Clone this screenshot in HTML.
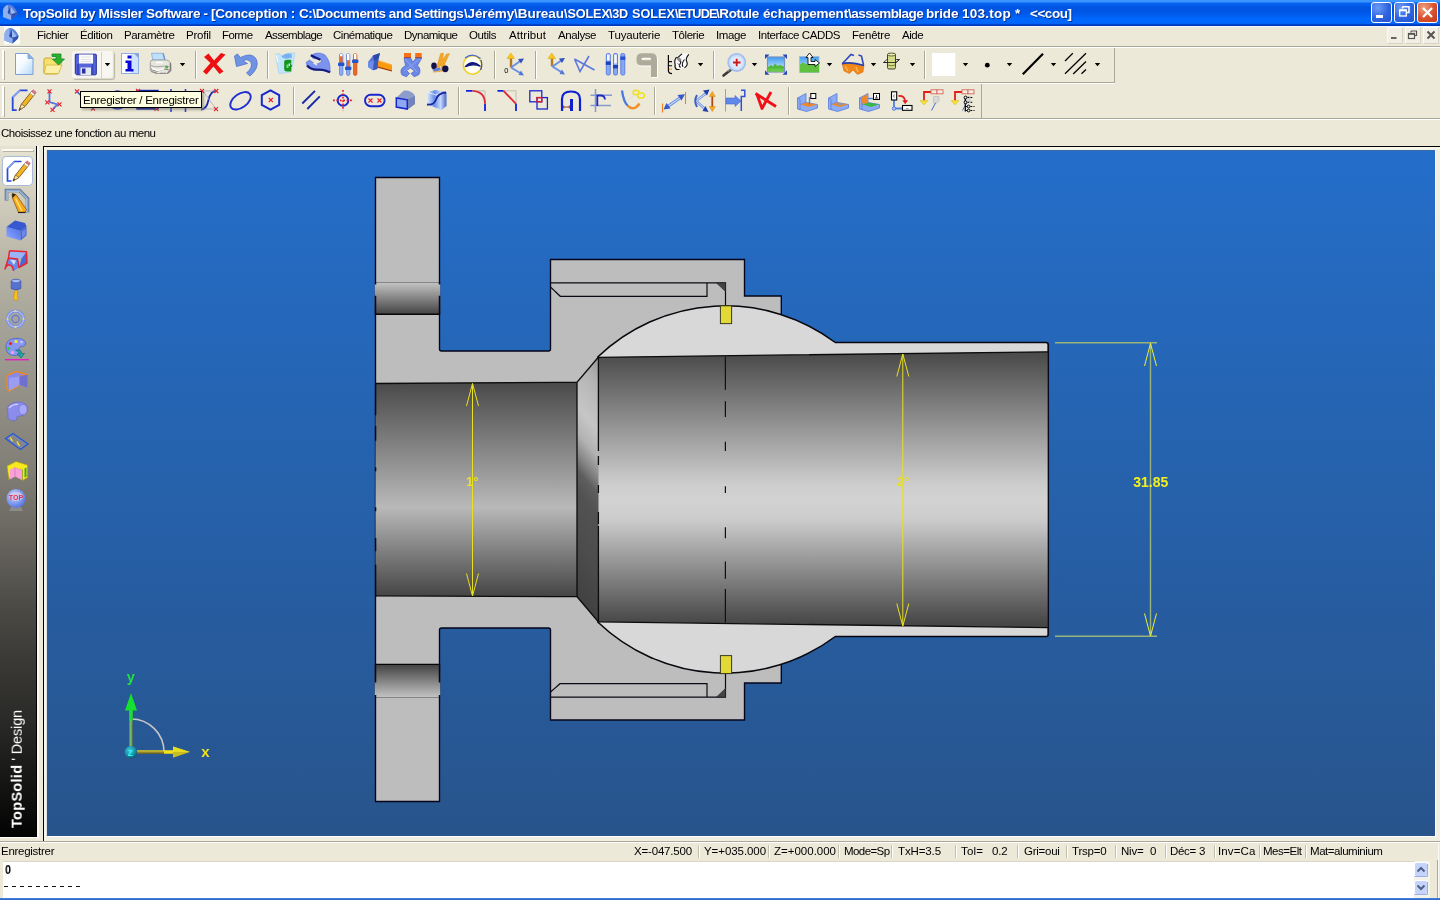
<!DOCTYPE html>
<html lang="fr"><head><meta charset="utf-8"><title>TopSolid by Missler Software</title>
<style>
html,body{margin:0;padding:0}
body{width:1440px;height:900px;overflow:hidden;background:#ECE9D8;position:relative;font-family:"Liberation Sans",sans-serif;font-size:11px;color:#000}
.a{position:absolute}
.t{position:absolute;white-space:pre;line-height:1;will-change:transform}
#title{left:0;top:0;width:1440px;height:26px;background:linear-gradient(180deg,#3c96ff 0,#3b94ff 2px,#0862f0 3px,#0460ee 5px,#0054e0 7px,#0055e4 11px,#005cef 15px,#0066fc 18px,#0068ff 22px,#0062f6 23.500px,#0044cc 24.500px,#0034b0 26px);border-bottom:1px solid #f2f5fb}
#title .t{color:#fff;font-weight:bold;font-size:13.5px;text-shadow:1px 1px 0 #0a2f8a}
.wb{position:absolute;top:2px;width:21px;height:21px;border-radius:3px;box-sizing:border-box;border:1px solid #fff;background:radial-gradient(circle at 30% 25%,#6c9cf5 0,#2e63e0 55%,#2352cf 100%)}
.wb.x{background:radial-gradient(circle at 30% 25%,#f0a080 0,#d8502c 55%,#c23a18 100%)}
#menu{left:0;top:25px;width:1440px;height:21px}
.sepH{position:absolute;left:0;width:1440px;height:1px}
.tbar{position:absolute;box-sizing:border-box;border-right:1px solid #aca899;border-bottom:1px solid #aca899;border-top:1px solid #fff}
.grip{position:absolute;width:1px;background:#aca899;box-shadow:1px 0 0 #fff}
.vsep{position:absolute;width:1px;background:#aca899;box-shadow:1px 0 0 #fff}
.ic{position:absolute;overflow:visible}
svg{will-change:transform}
.dd{position:absolute;width:0;height:0;border-left:3.5px solid transparent;border-right:3.5px solid transparent;border-top:4px solid #000}
#side{left:0;top:146px;width:36px;height:691px;background:linear-gradient(180deg,#e6e3d2 0,#d0cdbd 54px,#b9b6a8 114px,#a4a296 184px,#929086 254px,#807e75 324px,#67655e 394px,#4b4944 464px,#3a3936 514px,#2a2a28 574px,#161615 634px,#030303 690px);border-right:1px solid #000}
#frame{left:43px;top:146px;width:1397px;height:695px;box-sizing:border-box;border:1px solid #000;border-width:1px 0 0 1px;background:#f1efe2;box-shadow:inset 2px 2px 0 #f6f5ec}
#cv{left:47px;top:150px;width:1388px;height:686px;box-shadow:1px 1px 0 #fff,-1px 0 0 #dfe3e6}
#status .t{font-size:11px}
.ssep{position:absolute;top:845px;width:1px;height:13px;background:#c2bfae;box-shadow:1px 0 0 #fff}
</style></head><body>

<div class="a" id="title"><svg class="a" style="left:0;top:0" width="22" height="26" viewBox="0 0 22 26"><defs><g id="tsl"><path d="M3 10Q4 5 9 4.500Q14 5 17 12L16.500 15L11 20L3 17Z" fill="#5a80d8"/><path d="M3 10Q4 6 8 5L8 13L11.500 15L11 20L3 17Z" fill="#8fb0ee"/><path d="M7.500 12.500L10.500 6.500V13.800Z" fill="#2a48a0"/><path d="M10.500 6.500L15.500 13L10.500 13.800Z" fill="#9cb8f2"/><path d="M11.500 15L16.800 12.500L16.500 15L11 20Z" fill="#3454b4"/><path d="M8 13L11.500 15L16.800 12.500" fill="none" stroke="#2a48a0" stroke-width=".7"/></g></defs><use href="#tsl"/></svg>
<span class="t" style="left:23.0px;top:6.5px;font-size:13.5px;font-weight:bold;letter-spacing:-0.364px;">TopSolid by Missler Software - </span><span class="t" style="left:211.0px;top:6.5px;font-size:13.5px;font-weight:bold;letter-spacing:-0.232px;">[Conception : </span><span class="t" style="left:298.5px;top:6.5px;font-size:13.5px;font-weight:bold;letter-spacing:-0.419px;">C:\Documents and </span><span class="t" style="left:414.4px;top:6.5px;font-size:13.5px;font-weight:bold;letter-spacing:-0.508px;">Settings</span><span class="t" style="left:463.6px;top:6.5px;font-size:13.5px;font-weight:bold;letter-spacing:-0.150px;">\Jérémy</span><span class="t" style="left:513.6px;top:6.5px;font-size:13.5px;font-weight:bold;letter-spacing:-0.038px;">\Bureau</span><span class="t" style="left:563.6px;top:7.6px;font-size:12.7px;font-weight:bold;letter-spacing:-0.122px;">\SOLEX</span><span class="t" style="left:609.4px;top:7.6px;font-size:12.7px;font-weight:bold;letter-spacing:-0.245px;">\3D </span><span class="t" style="left:631.7px;top:7.6px;font-size:12.7px;font-weight:bold;letter-spacing:-0.003px;">SOLEX</span><span class="t" style="left:674.7px;top:7.6px;font-size:12.7px;font-weight:bold;letter-spacing:-0.805px;">\ETUDE</span><span class="t" style="left:716.4px;top:6.5px;font-size:13.5px;font-weight:bold;letter-spacing:-0.425px;">\Rotule </span><span class="t" style="left:762.5px;top:6.5px;font-size:13.5px;font-weight:bold;letter-spacing:-0.185px;">échappement</span><span class="t" style="left:847.5px;top:6.5px;font-size:13.5px;font-weight:bold;letter-spacing:-0.525px;">\assemblage </span><span class="t" style="left:926.0px;top:6.5px;font-size:13.5px;font-weight:bold;letter-spacing:-0.128px;">bride </span><span class="t" style="left:962.0px;top:6.5px;font-size:13.5px;font-weight:bold;letter-spacing:0.248px;">103.top </span><span class="t" style="left:1015.0px;top:6.5px;font-size:13.5px;font-weight:bold;letter-spacing:0.745px;">*  </span><span class="t" style="left:1030.0px;top:6.5px;font-size:13.5px;font-weight:bold;letter-spacing:-0.461px;">&lt;&lt;cou]</span><div class="wb" style="left:1371px"><div class="a" style="left:4px;top:12px;width:7px;height:3px;background:#fff"></div></div>
<div class="wb" style="left:1394px"><svg class="a" style="left:3px;top:2px" width="13" height="13" viewBox="0 0 13 13"><path d="M4.500 1.800H11V7.500H9M4.500 3.500V1.800" fill="none" stroke="#fff" stroke-width="1.500"/><rect x="1.700" y="5" width="6.600" height="6" fill="none" stroke="#fff" stroke-width="1.300"/><path d="M1.700 5.400H8.300" stroke="#fff" stroke-width="1.800"/></svg></div>
<div class="wb x" style="left:1417px"><svg class="a" style="left:3px;top:3px" width="13" height="13" viewBox="0 0 13 13"><path d="M2 2L11 11M11 2L2 11" stroke="#fff" stroke-width="2.200"/></svg></div>
</div>
<div class="a" id="menu"><svg class="a" style="left:4px;top:1px" width="17" height="19" viewBox="4 26 17 19"><rect x="4" y="26.500" width="16" height="18" fill="#fbfbf8"/><use href="#tsl" x="1.500" y="23.500"/></svg>
<span class="t" style="left:37.3px;top:4.5px;font-size:11.5px;font-weight:normal;letter-spacing:-0.431px;">Fichier</span><span class="t" style="left:80.3px;top:4.5px;font-size:11.5px;font-weight:normal;letter-spacing:-0.382px;">Édition</span><span class="t" style="left:124.3px;top:4.5px;font-size:11.5px;font-weight:normal;letter-spacing:-0.354px;">Paramètre</span><span class="t" style="left:186.3px;top:4.5px;font-size:11.5px;font-weight:normal;letter-spacing:-0.217px;">Profil</span><span class="t" style="left:222.3px;top:4.5px;font-size:11.5px;font-weight:normal;letter-spacing:-0.547px;">Forme</span><span class="t" style="left:264.7px;top:4.5px;font-size:11.5px;font-weight:normal;letter-spacing:-0.620px;">Assemblage</span><span class="t" style="left:333.3px;top:4.5px;font-size:11.5px;font-weight:normal;letter-spacing:-0.462px;">Cinématique</span><span class="t" style="left:404.3px;top:4.5px;font-size:11.5px;font-weight:normal;letter-spacing:-0.519px;">Dynamique</span><span class="t" style="left:469.3px;top:4.5px;font-size:11.5px;font-weight:normal;letter-spacing:-0.368px;">Outils</span><span class="t" style="left:508.7px;top:4.5px;font-size:11.5px;font-weight:normal;letter-spacing:0.083px;">Attribut</span><span class="t" style="left:557.7px;top:4.5px;font-size:11.5px;font-weight:normal;letter-spacing:-0.403px;">Analyse</span><span class="t" style="left:607.7px;top:4.5px;font-size:11.5px;font-weight:normal;letter-spacing:-0.181px;">Tuyauterie</span><span class="t" style="left:671.7px;top:4.5px;font-size:11.5px;font-weight:normal;letter-spacing:-0.437px;">Tôlerie</span><span class="t" style="left:715.7px;top:4.5px;font-size:11.5px;font-weight:normal;letter-spacing:-0.374px;">Image</span><span class="t" style="left:757.7px;top:4.5px;font-size:11.5px;font-weight:normal;letter-spacing:-0.407px;">Interface CADDS</span><span class="t" style="left:851.7px;top:4.5px;font-size:11.5px;font-weight:normal;letter-spacing:-0.220px;">Fenêtre</span><span class="t" style="left:901.7px;top:4.5px;font-size:11.5px;font-weight:normal;letter-spacing:-0.483px;">Aide</span><svg class="a" style="left:1386px;top:2px" width="54" height="18" viewBox="0 0 54 18"><g fill="#f1efe5"><rect x="1" y="0.500" width="15" height="16"/><rect x="19" y="0.500" width="15" height="16"/><rect x="37" y="0.500" width="15" height="16"/></g><g fill="none" stroke="#fbfaf6"><path d="M1.500 16.500V0.500H16.500M19.500 16.500V0.500H34.500M37.500 16.500V0.500H52.500"/></g><g fill="none" stroke="#d6d3c2"><path d="M1.500 16.500H16.500V0.500M19.500 16.500H34.500V0.500M37.500 16.500H52.500V0.500"/></g><path d="M5 11H10.500" stroke="#55554f" stroke-width="1.800"/><path d="M25 4H30.500V8.500H29M25 5.500V4" stroke="#55554f" stroke-width="1.200" fill="none"/><rect x="22.500" y="6.500" width="6" height="5" fill="none" stroke="#55554f" stroke-width="1.200"/><path d="M22.500 7H28.500" stroke="#55554f" stroke-width="1.600"/><path d="M41.500 4.500L48.500 11.500M48.500 4.500L41.500 11.500" stroke="#55554f" stroke-width="2"/></svg>
</div>
<div class="a" style="left:0;top:46px;width:1440px;height:1px;background:#aca899"></div>
<div class="a" style="left:0;top:47px;width:1440px;height:1px;background:#fff"></div>
<div class="a" style="left:0;top:82px;width:1114px;height:1px;background:#aca899"></div>
<div class="a" style="left:0;top:83px;width:1115px;height:1px;background:#fff"></div>
<div class="a" style="left:1114px;top:48px;width:1px;height:35px;background:#aca899"></div>
<div class="a" style="left:0;top:118px;width:1440px;height:1px;background:#aca899"></div>
<div class="a" style="left:0;top:119px;width:1440px;height:1px;background:#fff"></div>
<div class="a" style="left:981px;top:84px;width:1px;height:35px;background:#aca899"></div>
<div class="a" style="left:72px;top:51px;width:42px;height:28px;border-radius:3px;background:#f7f6f0;box-shadow:1px 1px 1px #b8b5a4,inset -1px -1px 1px #dddacb"></div>
<div class="a" style="left:101px;top:52px;width:1px;height:26px;background:#d4d1c0"></div>
<svg class="a" style="left:0;top:46px" width="1440" height="76" viewBox="0 46 1440 76">
<defs>
<linearGradient id="pg" x1="0" y1="0" x2="1" y2="1"><stop offset="0" stop-color="#fff"/><stop offset="0.45" stop-color="#f4faff"/><stop offset="1" stop-color="#b4d8f6"/></linearGradient>
<linearGradient id="sky" x1="0" y1="0" x2="0" y2="1"><stop offset="0" stop-color="#3c9cf0"/><stop offset="1" stop-color="#e8f4ff"/></linearGradient>
<linearGradient id="blu" x1="0" y1="0" x2="1" y2="1"><stop offset="0" stop-color="#a8c0f8"/><stop offset="1" stop-color="#3858c8"/></linearGradient>
<linearGradient id="srf" x1="0" y1="0" x2="1" y2="0"><stop offset="0" stop-color="#e8f0ff"/><stop offset="0.4" stop-color="#6890e8"/><stop offset="0.7" stop-color="#c8d8ff"/><stop offset="1" stop-color="#4868c8"/></linearGradient>
<g id="dd"><path d="M0.800 0H6.200L3.500 3.200Z" fill="#000"/></g>
<g id="rx"><path d="M-2 -2L2 2M2 -2L-2 2" stroke="#e8202c" stroke-width="1.1"/></g>
</defs>
<!-- grips -->
<g><rect x="2" y="50" width="2" height="29" fill="#fff"/><rect x="4" y="51" width="1" height="29" fill="#b4b1a0"/><rect x="2" y="86" width="2" height="30" fill="#fff"/><rect x="4" y="87" width="1" height="30" fill="#b4b1a0"/></g>
<!-- separators -->
<g stroke="#aca899" stroke-width="1"><path d="M195.5 51V79M267.5 51V79M494.5 51V79M535.5 51V79M713.5 51V79M924.5 51V79M293.5 87V115M458.5 87V115M654.5 87V115M788.5 87V115"/></g>
<g stroke="#fff" stroke-width="1"><path d="M196.5 51V79M268.5 51V79M495.5 51V79M536.5 51V79M714.5 51V79M925.5 51V79M294.5 87V115M459.5 87V115M655.5 87V115M789.5 87V115"/></g>
<!-- dropdown arrows -->
<g><use href="#dd" x="104" y="63"/><use href="#dd" x="179" y="63"/><use href="#dd" x="697" y="63"/><use href="#dd" x="751" y="63"/><use href="#dd" x="826" y="63"/><use href="#dd" x="870" y="63"/><use href="#dd" x="909" y="63"/><use href="#dd" x="962" y="63"/><use href="#dd" x="1006" y="63"/><use href="#dd" x="1050" y="63"/><use href="#dd" x="1094" y="63"/></g>
<!-- new -->
<path d="M15.5 53.5H28L33 58.5V74.5H15.5Z" fill="url(#pg)" stroke="#7f9fd8" stroke-width="1"/><path d="M28 53.5V58.5H33Z" fill="#8cb0ea" stroke="#7f9fd8" stroke-width=".8"/>
<!-- open -->
<path d="M44 60Q44 58 46 58H51L53 60H60Q62 60 61.5 62L59 72Q58.5 74 56.5 74H45.5Q43.5 74 43.8 72Z" fill="#f6e070" stroke="#c8a830" stroke-width="1"/><path d="M46 65H62L58.5 73.5H44.5Z" fill="#fbf0a8" stroke="#d8b840" stroke-width=".8"/>
<path d="M52 54H61V59H64.5L58.5 65L52.5 59H56V56.5H52Z" fill="#2cb030" stroke="#188820" stroke-width=".8"/>
<!-- save -->
<path d="M75.300 55Q75.300 54.200 76 54.200H95.500Q96.300 54.200 96.300 55V74Q96.300 74.800 95.500 74.800H76.500L75.300 73.500Z" fill="#5666da" stroke="#1e2892" stroke-width="1"/><path d="M92.500 64V74M78 64V74" stroke="#2c3cb4" stroke-width="2" opacity=".7"/>
<rect x="79" y="54.5" width="14" height="9" fill="#fbfbfb"/><path d="M81 57H91M81 59.500H91M81 61.500H91" stroke="#d0d0d8" stroke-width=".6"/>
<rect x="80.5" y="67.5" width="10.5" height="7.5" fill="#e4e8f0"/><rect x="82" y="68.5" width="3.5" height="5" fill="#2a30a0"/>
<!-- info -->
<rect x="121.5" y="53.5" width="17" height="20" fill="#cfe3fb" stroke="#8eb0e8" stroke-width="1"/><rect x="122" y="54" width="9" height="19" fill="#fff"/><path d="M134 53.5H138.5V58Z" fill="#88a0d8"/>
<path d="M127.5 55.5H131.5V58.5H127.5ZM125.5 60.5H131.5V69H133.5V71.5H125.5V69H127.5V63H125.5Z" fill="#0808d8"/>
<!-- printer -->
<path d="M151.500 53.300H163.500L165 60H152.800Z" fill="#bfe0fb" stroke="#8fb0e0" stroke-width=".9"/><path d="M163 53.500L164.800 59.500" stroke="#7090c8" stroke-width="1.200"/>
<path d="M150.300 62.500Q150.300 60 153 60H166.500Q171 61 171 65.500V70.500L168 73.500H156L150.300 70.500Z" fill="#e8e5de" stroke="#90908a" stroke-width=".8"/>
<path d="M170.300 63V70.500L167.500 73.200" fill="none" stroke="#7c7c74" stroke-width="1.300"/>
<path d="M150.500 65.500Q155 67.500 160 66.500Q164 65.500 169 66.500" fill="none" stroke="#a8a8a0" stroke-width="1"/><path d="M151 69Q156 72.500 161 70Q165 68.500 169 70" fill="none" stroke="#88887e" stroke-width="1.200"/><path d="M152 68.500L158 70.500L164 68.800" fill="none" stroke="#fff" stroke-width="1.400"/>
<path d="M156 62.500H163" stroke="#fff" stroke-width="1.600"/><rect x="165.300" y="65.800" width="2.600" height="2.600" fill="#40b040"/><path d="M151 71.500L157 73.300M160 73.300H166" stroke="#8a8a82" stroke-width="1.100"/>
<!-- red X -->
<path d="M204 57L208.5 53.5L214 60.5L221 53L225.5 54.5L216.5 64L223.5 71.5L219.5 74L213.5 66.5L206.5 74.5L203 71.5L210.5 63Z" fill="#ee1010"/>
<!-- undo -->
<path d="M234.5 56L236.5 66.5L247.5 63.5L243 61Q248 58 251 62.5Q253 67.5 246.5 73L250 76Q259.5 68 256.5 59.5Q252 51.5 240.5 57.5L237.5 54Z" fill="#7094e4" stroke="#5070c8" stroke-width=".8"/>
<!-- recycle bin -->
<path d="M275.300 54.500L279 53.500L282 56L287 53.300L294.800 53L293 64L290.500 72L279 73.800Z" fill="#c2e5fa" stroke="#a4d0f0" stroke-width=".7"/><path d="M281.500 56.500Q285 52.800 291.500 53.800L292 57.500Q287 59.500 283 58Z" fill="#78b0f2"/><path d="M276 55L278 62" stroke="#fff" stroke-width="1.300" opacity=".8"/>
<path d="M284.200 62Q284.200 59.800 287 59.800H291.300V63.500H288.500V66H291.300V71.500H287Q284.200 71.500 284.200 69Z" fill="#12961c"/><path d="M286.500 64.500H288.500V68H286.500Z" fill="#7ada7a"/><path d="M290 63L292.300 65.800L290 68.500Z" fill="#12961c"/>
<!-- wrench -->
<path d="M311 55.500Q318 50.800 325 55Q331 61.500 330 72.500Q322 69.500 314 70Q307 68.500 306 62.500L309.500 60L316 64.500L321.500 62L320.500 59L313 58.500Z" fill="#7c94f0" stroke="#5068d0" stroke-width=".6"/><path d="M310.800 55.200L320.300 59.800" stroke="#10187c" stroke-width="2.200"/><path d="M307 65.500Q311 70 318 69.500Q325 69.500 330 72.300" stroke="#141c80" stroke-width="2.200" fill="none"/><path d="M313.500 63L317 65" stroke="#e8eeff" stroke-width="1.400"/>
<!-- sliders -->
<g><rect x="339.5" y="53.5" width="3.4" height="22" rx="1.7" fill="#8cacf4" stroke="#5878d8" stroke-width=".7"/><rect x="340" y="55.5" width="2.4" height="9" fill="#e86828"/><rect x="340" y="53.8" width="2.4" height="2.5" fill="#fff"/><rect x="338" y="62.5" width="6.4" height="3.6" rx="1.2" fill="#2454d0"/>
<rect x="346.5" y="53.5" width="3.4" height="22" rx="1.7" fill="#8cacf4" stroke="#5878d8" stroke-width=".7"/><rect x="347" y="60" width="2.4" height="8" fill="#e86828"/><rect x="347" y="53.8" width="2.4" height="6.4" fill="#fff"/><rect x="345" y="66.5" width="6.4" height="3.6" rx="1.2" fill="#2454d0"/>
<rect x="353.5" y="53.5" width="3.4" height="22" rx="1.7" fill="#e86828" stroke="#c85018" stroke-width=".7"/><rect x="354" y="53.8" width="2.4" height="5.5" fill="#fff"/><rect x="352" y="59.5" width="6.4" height="3.6" rx="1.2" fill="#2454d0"/></g>
<!-- hammer -->
<path d="M377.500 60.300L392 65V71L377 66.800Z" fill="#fa9a10"/><path d="M377 66.800L392 71" stroke="#a03808" stroke-width="1.200"/><path d="M378 60.500L392 65" stroke="#fcb040" stroke-width="1"/>
<path d="M368 62L373 55.500L380 53L378.500 59L377.300 69L373 70.300L368 67Z" fill="#5878dc"/><path d="M373 55.500L380 53L378.500 59L374 61Z" fill="#3048a8"/><path d="M368 62L374 61L373 70.300L368 67Z" fill="#6c8ce8"/><path d="M374 61L378.500 59L377.300 69L373 70.300Z" fill="#3c58bc"/>
<!-- clamp -->
<rect x="404" y="53" width="7" height="5" fill="#f87018"/><rect x="415.200" y="53" width="6.500" height="5" fill="#f87018"/><path d="M404 57.500H411M415.200 57.500H421.700" stroke="#c04808" stroke-width="1"/>
<path d="M404 58H410.500L413 62L416 58H421.700L417.500 65.500Q422 70 418.500 75L414 76.700L411 73.500L414.500 71L410.500 68L406.500 70.500L409.500 73.500L406.500 76.700L402 75Q398.500 69.500 405.500 65.500Z" fill="#6c88e4" stroke="#4a64c4" stroke-width=".7"/><path d="M405 59L417 72M420 59L404 71" stroke="#8ca4f0" stroke-width="1.300" opacity=".7"/>
<!-- robot -->
<path d="M440.500 53.500L443.500 53L442.500 60L446.500 54L449.500 53.500L445 63.500L443.500 71L440.500 71.500L441.500 64L438 69.500L436.500 68Z" fill="#f4a628" stroke="#e08c10" stroke-width=".4"/>
<ellipse cx="434" cy="65.800" rx="2.800" ry="3.400" fill="#141048"/><ellipse cx="445.300" cy="68.800" rx="3.200" ry="3.400" fill="#141048"/><path d="M432 69.500L439.500 67.500L441 70L434.500 72Z" fill="#6080d8"/><path d="M433 72L440 71.500" stroke="#f4a628" stroke-width="1"/>
<!-- circle icon -->
<circle cx="472.5" cy="65" r="9.2" fill="#fdfdf4" stroke="#f0d020" stroke-width="1.6"/><path d="M465 58Q472.5 52 480.5 58.5" stroke="#4868d0" stroke-width="1.2" fill="none"/><path d="M480.8 60Q483 65 480.5 70" stroke="#3050c0" stroke-width="1.2" fill="none"/>
<path d="M465.5 66.5Q472.5 59 480 66Q472.5 63.5 465.5 66.5Z" fill="#101880" stroke="#101880" stroke-width="1.4" stroke-linejoin="round"/>
<!-- axis 0 -->
<g><path d="M511 67.5V58" stroke="#b87820" stroke-width="2.4"/><path d="M507 58.5L510.8 53L514.5 58.5Z" fill="#f8c820" stroke="#e0a810" stroke-width=".6"/>
<path d="M511 67.5L521 60.5M511 67.5L521 73.5" stroke="#6890e8" stroke-width="2"/><path d="M524 58.5L518 59L521 63.5Z" fill="#3050c0"/><path d="M524 75.5L518.5 75L521 70.5Z" fill="#5078d8"/>
<text x="504.3" y="72.8" font-family="'Liberation Sans',sans-serif" font-size="7.5" fill="#000">0</text></g>
<!-- axis -->
<g><path d="M552 66.5V58" stroke="#b87820" stroke-width="2.4"/><path d="M548 58.5L551.8 53L555.5 58.5Z" fill="#f8c820" stroke="#e0a810" stroke-width=".6"/>
<path d="M552.5 66.5L562 60M552.5 66.5L562 72.5" stroke="#6890e8" stroke-width="2"/><path d="M565 58L559 58.5L562 63Z" fill="#3050c0"/><path d="M565 74.5L559.5 74L562 69.5Z" fill="#5078d8"/></g>
<!-- cross lines -->
<path d="M574.5 59L594.5 70M589 56L580 71.5L574.5 59" fill="none" stroke="#5c78e0" stroke-width="1.6"/>
<!-- blue sliders -->
<g><rect x="606.3" y="53.5" width="4" height="21.5" rx="1.5" fill="#88a8f4" stroke="#4870e0" stroke-width=".8"/><rect x="607" y="54.5" width="2.6" height="6" fill="#f4f8ff"/><rect x="605.8" y="61.5" width="5" height="3.4" fill="#1840c0"/>
<rect x="613.5" y="53.5" width="4" height="21.5" rx="1.5" fill="#88a8f4" stroke="#4870e0" stroke-width=".8"/><rect x="614.2" y="54.5" width="2.6" height="9" fill="#f4f8ff"/><rect x="613" y="65" width="5" height="3.4" fill="#1840c0"/>
<rect x="620.8" y="53.5" width="4" height="21.5" rx="1.5" fill="#88a8f4" stroke="#4870e0" stroke-width=".8"/><rect x="620.3" y="56.5" width="5" height="3.4" fill="#2850d0"/></g>
<!-- gray 9 -->
<path d="M636.500 58Q636.500 53.200 642.500 53.200H651Q657 53.200 657 59V77H651V65.500H642.500Q636.500 65.500 636.500 61ZM641.500 59Q641.500 60.300 643.500 60.300H651V58.800Q651 57.800 649.500 57.800H643.500Q641.500 57.800 641.500 59Z" fill="#fff" fill-rule="evenodd" transform="translate(1 1)"/><path d="M636.500 58Q636.500 53.200 642.500 53.200H651Q657 53.200 657 59V77H651V65.500H642.500Q636.500 65.500 636.500 61ZM641.500 59Q641.500 60.300 643.500 60.300H651V58.800Q651 57.800 649.500 57.800H643.500Q641.500 57.800 641.500 59Z" fill="#aeab9b" fill-rule="evenodd"/>
<!-- hand -->
<path d="M668.400 55V70.500Q668.400 73.500 672 73.700" fill="none" stroke="#0a0a0a" stroke-width="1.200"/><path d="M668.400 61.600H672M668.400 65.800H672" stroke="#0a0a0a" stroke-width="1.100"/><path d="M669 69.200H672" stroke="#f09828" stroke-width="1.100"/>
<path d="M675 58.500L681.500 54L687.500 52.800L688.800 55L686.500 59.500L687.500 63.500L684 67.800L677 69.600L674.800 65Z" fill="#fafafa"/>
<path d="M676.500 57Q673.800 61 675.200 64.500Q674.300 67.500 676.500 69.500H679.500" fill="none" stroke="#0a0a0a" stroke-width="1.100"/>
<path d="M682 53.800L676.800 58.300M678 59Q682.300 60.500 680 64Q678.500 66 680.500 67.500M684.500 59.500Q681 63.500 683 66.800M688.800 54.300Q685 58.500 686.800 61.800Q688.300 65.500 684.500 67.800" fill="none" stroke="#0a0a0a" stroke-width="1.100"/>
<path d="M676.800 59L679 57L681.500 59.500L679.500 62.300Z" fill="#8c8c8c"/><path d="M677.500 63L679.500 65.500" stroke="#8c8c8c" stroke-width="1"/>
<!-- magnifier -->
<path d="M730.5 70L723.5 75.5" stroke="#383838" stroke-width="2.6" stroke-linecap="round"/><path d="M730 69.5L727.5 71.5" stroke="#888" stroke-width="1.6"/>
<circle cx="736.7" cy="62.5" r="8.6" fill="#cddff8" stroke="#a0bcf0" stroke-width="1.6"/><circle cx="736.7" cy="62.5" r="6" fill="#e4eefc" opacity=".7"/><path d="M733 62.5H740.5M736.7 58.8V66.3" stroke="#d01818" stroke-width="1.8"/>
<!-- fit picture -->
<rect x="767.5" y="57" width="17" height="15" fill="url(#sky)" stroke="#7890c0" stroke-width="1.2"/><path d="M768 67L771 65L773 66.5L775 63.5L777.5 66L780 65L784 66.5V71.5H768Z" fill="#50b838"/><path d="M768 68.5H784V71.5H768Z" fill="#68c848"/>
<path d="M765 54.5H769.5L765 59ZM787 54.5H782.5L787 59ZM765 74.8H769.5L765 70.3ZM787 74.8H782.5L787 70.3Z" fill="#2848b8"/>
<!-- picture arrow -->
<rect x="799.5" y="56.5" width="19.5" height="16" fill="url(#sky)" stroke="#a8b8d8" stroke-width=".8"/><path d="M800 64.5L803 62.5L806 64H819V72.5H800Z" fill="#60c040"/>
<path d="M809.5 53L813 57.5H811V61.5H815V59.5L819.5 63L815 66.5V64.5H808V57.5H806Z" fill="#fff" stroke="#101010" stroke-width=".9" stroke-linejoin="round"/>
<!-- glasses -->
<path d="M843 63L851 54.5L854 55.5M858.5 55L861.5 56L863.5 65" fill="none" stroke="#3048c0" stroke-width="1.6"/>
<path d="M842 63.5Q852 61.5 864 65.5L863 72L857.5 74.5L853 70L849.5 73.5L844 71Z" fill="#f08818" stroke="#d87010" stroke-width=".6"/><path d="M842 63.5Q852 61.5 864 65.5" fill="none" stroke="#2840b0" stroke-width="1.8"/><path d="M845 66L848 71M856 67L858 72" stroke="#f8b860" stroke-width="1.4"/>
<!-- bolt -->
<path d="M883.5 62.5L887 59.5H899.5L896 62.5Z" fill="#f8f8e8" stroke="#181818" stroke-width=".8"/>
<rect x="887.5" y="53.5" width="8" height="15.5" rx="1.5" fill="#d4dc88" stroke="#303020" stroke-width=".9"/><ellipse cx="891.5" cy="54.5" rx="4" ry="1.5" fill="#e8eca8" stroke="#303020" stroke-width=".7"/><path d="M883.5 62.5H896L899.5 59.5" fill="none" stroke="#181818" stroke-width=".8"/><path d="M887.5 65Q891.5 66.5 895.5 65" fill="none" stroke="#505030" stroke-width=".7"/>
<!-- white square, dot, line, hatch -->
<rect x="932" y="53" width="23.3" height="23" fill="#fff"/>
<circle cx="987.3" cy="65.2" r="2.4" fill="#000"/>
<path d="M1022.8 74.2L1043 53.8" stroke="#000" stroke-width="2.2"/>
<path d="M1065 61L1072.8 53.2M1065 73.8L1086 53.2M1073.2 74L1086 61.5M1081.500 73.800L1086 69.500" stroke="#000" stroke-width="1.300"/>

<!-- tb2: pencil -->
<path d="M16.7 110.2H12.7V97.4L20 90.3H27.5" fill="none" stroke="#2a48d8" stroke-width="1.8"/><path d="M12.7 97.4L20 90.3" stroke="#88a8f0" stroke-width="1.8"/>
<path d="M19 110.5L21.5 104L31.5 91.5L35 94L25 106.5Z" fill="#f4b428" stroke="#6a4a10" stroke-width=".8"/><path d="M19 110.5L21.5 104L25 106.5Z" fill="#f8e0b0" stroke="#6a4a10" stroke-width=".6"/><path d="M19 110.5L20 108L21 109Z" fill="#222"/>
<path d="M30 93.3L31.5 91.5L35 94L33.5 95.8Z" fill="#fff" stroke="#888" stroke-width=".5"/><path d="M31.5 91.5L33 89.8L36.3 92.3L35 94Z" fill="#e87890" stroke="#a04858" stroke-width=".5"/>
<!-- axes -->
<path d="M49.5 91.5V102L57.5 104.5L53 109" fill="none" stroke="#5878e0" stroke-width="1.8"/><use href="#rx" x="49.5" y="91.3"/><use href="#rx" x="47.3" y="102.3"/><use href="#rx" x="59.5" y="104.3"/><use href="#rx" x="52.5" y="109.8"/>
<!-- hidden icons (partially behind tooltip) -->
<use href="#rx" x="77" y="91.5"/><use href="#rx" x="93" y="108.5"/><path d="M77 91.5L93 108.5" stroke="#4060d8" stroke-width="1.4"/>
<circle cx="117.5" cy="100" r="9" fill="none" stroke="#2838d0" stroke-width="1.6"/>
<rect x="137.5" y="91" width="20" height="17.5" fill="none" stroke="#1020a8" stroke-width="2.4"/><use href="#rx" x="156.5" y="108.8"/><use href="#rx" x="138" y="91"/>
<path d="M171 89V112M185.5 89V112M166 100.5H191" stroke="#2848d0" stroke-width="1.6"/>
<path d="M201 109.5Q206.5 109.5 208.5 100Q210.5 90.8 216.5 90.8" fill="none" stroke="#1828b0" stroke-width="1.8"/><path d="M201 91H216.5M201 109H216.5M203 91L216 109" stroke="#a0a0b8" stroke-width=".7"/><use href="#rx" x="216.3" y="91"/><use href="#rx" x="216" y="109.2"/><use href="#rx" x="202" y="91"/>
<!-- ellipse -->
<ellipse cx="240.5" cy="100.8" rx="11.6" ry="6.8" transform="rotate(-36 240.5 100.8)" fill="none" stroke="#2030d0" stroke-width="1.9"/>
<!-- hexagon -->
<path d="M270.5 90.3L279.2 95.2V104.8L270.5 109.7L261.8 104.8V95.2Z" fill="none" stroke="#1828d0" stroke-width="2"/><use href="#rx" x="270.8" y="100"/>
<!-- parallel -->
<path d="M302.3 103.5L315 90.8M307.3 109L319.8 96.3" stroke="#1828a8" stroke-width="1.9"/>
<!-- crosshair -->
<circle cx="343" cy="100.4" r="5.3" fill="none" stroke="#1828d0" stroke-width="2"/><path d="M333 100.4H353.5M343 90V110.8" stroke="#e81828" stroke-width="1.6" stroke-dasharray="1.8 1.6"/>
<!-- slot -->
<rect x="365" y="94.8" width="19.6" height="11.4" rx="5.7" fill="none" stroke="#1828d0" stroke-width="1.9"/><use href="#rx" x="370.5" y="100.5"/><use href="#rx" x="379.5" y="100.5"/>
<!-- box -->
<path d="M396 98L404 90.5Q412 90 415 96V104L407.5 109.5L396 107.5Z" fill="#8c9ccc"/><path d="M407.5 99.5L415 96V104L407.5 109.5Z" fill="#7484b8"/>
<path d="M396.3 98L407.3 99.8V109L396.3 107Z" fill="#90a8f4" stroke="#1828d0" stroke-width="1.5"/>
<!-- surface -->
<path d="M427 92L436 90L446.5 92V106L441.5 110L426.5 104Z" fill="url(#srf)"/><path d="M427 92L436 95L446.5 92" fill="none" stroke="#fff" stroke-width="1" opacity=".7"/>
<path d="M427 104.5Q434 105.5 436 99.5Q438 93 446 92.5" fill="none" stroke="#1828a0" stroke-width="1.8"/>
<!-- fillet -->
<path d="M472.5 90.8H485V104" fill="none" stroke="#b0b0b0" stroke-width=".7"/><path d="M466 90.8H472.5M485 103.8V111" stroke="#1020e0" stroke-width="1.8"/><path d="M472.5 90.8Q485 91.5 485 103.8" fill="none" stroke="#e02838" stroke-width="1.8"/>
<!-- chamfer -->
<path d="M503.5 90.8H516V104" fill="none" stroke="#b0b0b0" stroke-width=".7"/><path d="M497.5 90.8H503.5M516 103.8V111" stroke="#1020e0" stroke-width="1.8"/><path d="M503.5 90.8L516 103.8" fill="none" stroke="#e02838" stroke-width="1.8"/>
<!-- two squares -->
<rect x="529.8" y="90.8" width="12" height="11" fill="none" stroke="#1828d0" stroke-width="1.3"/><rect x="537" y="97.6" width="10.4" height="11.4" fill="none" stroke="#1828d0" stroke-width="1.3"/><rect x="537" y="97.6" width="4.8" height="4.2" fill="none" stroke="#e81828" stroke-width="1.3"/>
<!-- arch -->
<path d="M562 111V99Q562 91.5 571 91.5Q580 91.5 580 99V111" fill="none" stroke="#1020d0" stroke-width="2.2"/><path d="M571.5 99V111" stroke="#1020d0" stroke-width="3"/><path d="M563.5 107H569.5M563.7 105.5V108.5M569.3 105.5V108.5" stroke="#a03828" stroke-width="1"/>
<!-- trim -->
<path d="M590.5 95.3H612M590.5 105.5H611M595.5 89V112" stroke="#8898d0" stroke-width="1.5"/><path d="M597.3 106V95.5H601Q604.5 95.5 605 99.5" fill="none" stroke="#1828c0" stroke-width="1.8"/>
<!-- curve 8 -->
<path d="M622 90.5Q623.5 102 628 106" fill="none" stroke="#4878e0" stroke-width="2.2"/><path d="M628 106Q634 111.500 639.5 103.500" fill="none" stroke="#f09028" stroke-width="2.4"/><path d="M628 101L634 95" stroke="#c0c0c8" stroke-width=".6" stroke-dasharray="1 1"/>
<ellipse cx="636" cy="92.500" rx="3" ry="2.300" fill="none" stroke="#f0e020" stroke-width="1.5"/><ellipse cx="641" cy="95.500" rx="3.400" ry="2.600" fill="none" stroke="#f0e020" stroke-width="1.5"/>
<!-- dim arrow -->
<path d="M662.500 103.500V112.500M685.500 92V104" stroke="#f08020" stroke-width="1.100"/><path d="M667 107L682 96.500" stroke="#6890e8" stroke-width="3"/><path d="M667 107L682 96.500" stroke="#e8f0ff" stroke-width="1"/>
<path d="M663.500 109.500L666.500 103L670.500 108.500Z" fill="#3858c8"/><path d="M685 94.300L677.500 95L681.500 100.500Z" fill="#3858c8"/>
<!-- rotate arrows -->
<path d="M696 101L707 92.500M696 101L705.500 109.500" stroke="#7898e8" stroke-width="2.600"/><path d="M696 101L707 92.500M696 101L705.500 109.500" stroke="#e8f0ff" stroke-width=".8"/>
<path d="M709.500 89.500L703 90.500L707 95.500Z" fill="#2040a8"/><path d="M708.500 112L702.500 111L705.500 106Z" fill="#2040a8"/><path d="M697 95Q693.500 101 697 107" fill="none" stroke="#4060c0" stroke-width="2"/>
<path d="M712.300 95V108" stroke="#b04818" stroke-width="1.800"/><path d="M709.300 96.500L712.300 91.500L715.300 96.500ZM709.300 106.500L712.300 111.500L715.300 106.500Z" fill="#f8a820" stroke="#d08010" stroke-width=".5"/>
<!-- blue arrow tab -->
<path d="M725.500 89V111.500" stroke="#e03040" stroke-width=".9" stroke-opacity=".6"/><path d="M726 98H735V95.500L741 101L735 106.500V104H726Z" fill="#6088e8" stroke="#4868d0" stroke-width=".6"/>
<path d="M741.300 111V96.500H744.800V90.300H741" fill="none" stroke="#3050d8" stroke-width="1.500"/>
<!-- red x mark -->
<path d="M755.500 93.500L776 106.500M771 92L762 108.500L757 94.500" fill="none" stroke="#f01018" stroke-width="2.800" stroke-linejoin="round"/>
<!-- seat icons -->
<g id="seat"><path d="M797.500 98L806 93.500V102.500L817.500 104.500V108L806.500 111.500L797.500 109Z" fill="#8cacf4" stroke="#5878d8" stroke-width=".8"/><path d="M797.500 98L800 99.500V110M800 104.500L806 102.500" fill="none" stroke="#5878d8" stroke-width=".7"/></g>
<path d="M800.500 104.500L806.500 102.500L817 104.500L809 107Z" fill="#f08828"/><path d="M809.500 104.500V97" stroke="#5878d8" stroke-width="1.400"/><rect x="810.800" y="93.500" width="5" height="5" fill="#fff" stroke="#000" stroke-width="1"/>
<use href="#seat" x="31"/><path d="M831.500 104.500L837.500 102.500L848 104.500L840 107Z" fill="#f08828"/><path d="M836 104L840.500 102.800L845 104L840.500 105.500Z" fill="#9098a8"/>
<use href="#seat" x="62"/><path d="M862.500 104.500L868.500 102.500L879 104.500L871 107Z" fill="#38b848"/><path d="M861.500 97.500L868 94V102.500L862.500 104.500Z" fill="#f08828"/><path d="M868 98.500H873.500" stroke="#5878d8" stroke-width="1.400"/><rect x="873.500" y="93.500" width="6" height="6" fill="#fff" stroke="#000" stroke-width="1"/><path d="M876.500 95V97.500M875 98H878" stroke="#000" stroke-width=".8"/>
<!-- icon D -->
<path d="M894 100V108.500H902.500" fill="none" stroke="#5080e0" stroke-width="1.800"/><circle cx="894" cy="108.500" r="1.800" fill="#a8c0f8" stroke="#4870d8" stroke-width=".8"/>
<rect x="891.500" y="91.800" width="5.200" height="8.200" fill="#fff" stroke="#000" stroke-width="1.100"/><rect x="902.500" y="105.500" width="9.500" height="4.800" fill="#fff" stroke="#000" stroke-width="1.100"/><path d="M893 96L895 94.500M893 96L895 97.500M906 108.500H908.500" stroke="#555" stroke-width=".6"/>
<path d="M898.500 96Q904.500 95.500 905 101" fill="none" stroke="#e02020" stroke-width="1.800"/><path d="M902.300 100.500L905.300 104.300L908 100Z" fill="#e02020"/>
<!-- icon E,F -->
<g id="icE"><path d="M924 100.500V92H931" fill="none" stroke="#e02018" stroke-width="1.800"/><rect x="931" y="89.800" width="6" height="4" fill="#f6ece2" stroke="#d06858" stroke-width=".9"/><rect x="937" y="89.800" width="6" height="4" fill="#f6ece2" stroke="#d06858" stroke-width=".9"/>
<path d="M920 100.500H928L924 105Z" fill="#f8e030" stroke="#d8b820" stroke-width=".5"/><path d="M933.500 96.500H939V101L936.500 103H933.500Z" fill="#d8d8d8" stroke="#c0c0c0" stroke-width=".8"/><path d="M935.500 103L931.500 110.500" stroke="#4868c8" stroke-width="1"/></g>
<use href="#icE" x="31"/>
<path d="M965.300 97V111.500M965.300 106.500H968M965.300 110.500H968" fill="none" stroke="#000" stroke-width="1.200"/><path d="M967.500 97.500H973.500M967.500 102.300H973.500M970.500 106.500H974.500M970.500 110.500H974.500" stroke="#000" stroke-width="1.100" stroke-dasharray="1.800 1.200"/><circle cx="965.500" cy="97.500" r="1.400" fill="#eee" stroke="#000" stroke-width="1"/><circle cx="965.500" cy="102.300" r="1.400" fill="#eee" stroke="#000" stroke-width="1"/><circle cx="968.600" cy="106.500" r="1.400" fill="#eee" stroke="#000" stroke-width="1"/><circle cx="968.600" cy="110.500" r="1.400" fill="#eee" stroke="#000" stroke-width="1"/>

</svg>
<div class="a" style="left:82px;top:93px;width:122px;height:17px;background:rgba(90,88,76,.45);filter:blur(1px)"></div>
<div class="a" style="left:80px;top:91px;width:122px;height:17px;box-sizing:border-box;border:1px solid #000;background:#ffffe1"></div>

<div class="a" id="side"></div>
<div class="a" style="left:37px;top:146px;width:2px;height:693px;background:#fbfaf5"></div>
<div class="a" style="left:0;top:837px;width:38px;height:1px;background:#fff"></div>
<div class="a" style="left:2px;top:149px;width:31px;height:2px;background:#fbfaf4;box-shadow:1px 1px 0 #b8b5a4"></div>
<div class="a" style="left:2px;top:156px;width:31px;height:30px;box-sizing:border-box;border:1px solid #a8bcd8;border-radius:4px;background:#fff"></div>
<svg class="a" style="left:0;top:150px" width="36" height="370" viewBox="0 150 36 370">
<defs><linearGradient id="sb1" x1="0" y1="0" x2="1" y2="1"><stop offset="0" stop-color="#a0b4ff"/><stop offset="1" stop-color="#3048d0"/></linearGradient>
<linearGradient id="sb3" x1="1" y1="0" x2="0" y2="1"><stop offset="0" stop-color="#4c6ce8"/><stop offset="1" stop-color="#90acff"/></linearGradient><radialGradient id="sb2" cx=".4" cy=".35" r=".7"><stop offset="0" stop-color="#c8d8ff"/><stop offset="1" stop-color="#5070e0"/></radialGradient></defs>
<!-- 1 pencil selected -->
<path d="M11.500 181H7.500V168.500L14.500 161.500H21.500" fill="none" stroke="#2a48d8" stroke-width="1.700"/><path d="M7.500 168.500L14.500 161.500" stroke="#88a8f0" stroke-width="1.700"/>
<path d="M13 181L15.500 175L25.500 162.500L29 165L19 177.500Z" fill="#f4b428" stroke="#6a4a10" stroke-width=".8"/><path d="M13 181L15.500 175L19 177.500Z" fill="#f8e0b0" stroke="#6a4a10" stroke-width=".6"/><path d="M13 181L14 178.500L15 179.500Z" fill="#222"/>
<path d="M24 164.300L25.500 162.500L29 165L27.500 166.800Z" fill="#fff" stroke="#888" stroke-width=".5"/><path d="M25.500 162.500L27 160.800L30.300 163.300L29 165Z" fill="#e87890" stroke="#a04858" stroke-width=".5"/>
<!-- 2 pencil w/ frame -->
<path d="M6.500 200.500V190.500H19.500L27.500 198.800V212.500" fill="none" stroke="#506c90" stroke-width="3.600" stroke-linejoin="miter"/><path d="M6.500 200.500V190.500H19.500L27.500 198.800V212.500" fill="none" stroke="#90a8c8" stroke-width="2"/><path d="M7.300 200V191.500H19.200L26.500 199V212" fill="none" stroke="#c4d4e8" stroke-width=".7"/>
<path d="M12 193.500L16 194.500L26.500 209.500L25 212.500H18.500L12.500 198Z" fill="#f8a818" stroke="#7a5008" stroke-width=".7"/><path d="M12 193.500L16 194.500L12.500 198Z" fill="#2c2418"/><path d="M15.500 198.500L22 211" stroke="#fce070" stroke-width="1.600"/><path d="M18 212.500H25.500" stroke="#202020" stroke-width="1.200"/>
<!-- 3 box -->
<path d="M6.500 227L15 220.500L25 223L26.500 226.500L20.500 231Z" fill="#3858d0"/><path d="M6.500 227L20.500 231V240.500L6.500 236.500Z" fill="url(#sb3)"/><path d="M20.500 231L26.500 226.500V235.500L20.500 240.500Z" fill="#4464dc"/><path d="M22 231.500L25.500 229V235L22 238Z" fill="#88a4f8" opacity=".6"/>
<!-- 4 red-blue -->
<path d="M9.500 251L26.500 251.800L21.500 258.500L8.500 258Z" fill="#98b4f8"/><path d="M21.500 258.500L26.500 251.800L27 263L19 267.500Z" fill="#4868d8"/><path d="M8.500 258L17.500 259L19 267.500L13.500 271Q13 265.500 9.500 265Q6.500 265 5 269Z" fill="#6888ec"/><path d="M10 259.500L16 260.500L14 265Z" fill="#d0e0ff"/>
<path d="M9.500 250.800L26.500 251.800L27 263L19 267.500L17.500 259L8.500 258M9.500 250.800L8.500 258L5 269Q6.500 264.500 9.500 265Q13 265.500 13.500 271" fill="none" stroke="#e82434" stroke-width="1.500" stroke-linejoin="round"/>
<!-- 5 piston -->
<ellipse cx="16" cy="281.500" rx="4.800" ry="2.200" fill="#a8b8f0" stroke="#4058b0" stroke-width=".8"/><path d="M11.200 281.500V288.500Q16 291.500 20.800 288.500V281.500Q16 284.500 11.200 281.500Z" fill="#5870d0" stroke="#3850a8" stroke-width=".7"/>
<path d="M15 290.500H17.500V296Q19 298.500 16.500 300.500Q13 300.500 13.500 297Z" fill="#f8c020" stroke="#c89010" stroke-width=".7"/>
<!-- 6 ring -->
<circle cx="15.500" cy="319" r="8" fill="none" stroke="#7890e8" stroke-width="3.200"/><circle cx="15.500" cy="319" r="8" fill="none" stroke="#c0d0ff" stroke-width="1"/><circle cx="15.500" cy="319" r="3.600" fill="none" stroke="#6078d8" stroke-width="1.200"/>
<circle cx="15.500" cy="311" r="1.100" fill="#f8e040"/><circle cx="15.500" cy="327" r="1.100" fill="#f8e040"/><circle cx="7.500" cy="319" r="1.100" fill="#f8e040"/><circle cx="23.500" cy="319" r="1.100" fill="#f8e040"/>
<!-- 7 palette -->
<path d="M6 348Q5 340 14 338.500Q25 337.500 26 344Q24 347 20.500 346.500Q17.500 348 20 351Q21 356 13 355.500Q6.500 354.500 6 348Z" fill="#8898f0" stroke="#5060c8" stroke-width=".8"/>
<circle cx="10.500" cy="343.500" r="1.600" fill="#e82020"/><circle cx="16" cy="341.500" r="1.600" fill="#f8e830"/><circle cx="8.500" cy="348.500" r="1.600" fill="#30d030"/><circle cx="12.500" cy="352.500" r="1.600" fill="#f8a0e0"/><circle cx="21.500" cy="342" r="1.300" fill="#c0c8ff"/>
<path d="M15.500 350Q21 349 22 353.500H24.500L21 358L17 354H19.500Q19 351.500 15.500 350Z" fill="#20a0a8" stroke="#106870" stroke-width=".6"/><path d="M5 359.700H29" stroke="#e020c0" stroke-width="1.400"/>
<!-- 8 orange corner -->
<path d="M7 375.500L16 371.500L27.500 374.500V387.500L19.500 385L9 391Z" fill="#8888e8"/><path d="M7 375.500L16 371.500L27.500 374.500L19.500 376.500V385L9 391" fill="none" stroke="#f08820" stroke-width="1.500"/><path d="M9 378L19.500 376.500V385L9 391Z" fill="#9c9cf0"/><path d="M7 375.500V389L9 391" fill="none" stroke="#f08820" stroke-width="1.300"/><path d="M19.500 376.500L27.500 374.500V387.500L19.500 385Z" fill="#7070d0"/>
<!-- 9 pipe elbow -->
<path d="M8 414Q5 405 14 402.500Q24 400.500 27.500 406.500Q29 412 23 415.500L17 416.500L16.500 420Q11 422 8 418Z" fill="#8c8cec" stroke="#6868c8" stroke-width=".7"/><ellipse cx="23" cy="409.500" rx="4.200" ry="5.200" fill="#a8a8f8" stroke="#7070d0" stroke-width=".7"/><path d="M9 408Q13 404 18 404.500" fill="none" stroke="#d0d0ff" stroke-width="1.200"/>
<!-- 10 plate -->
<path d="M5.500 438.500L13 433.500L28 444L20.500 449.500Z" fill="none" stroke="#2858d8" stroke-width="1.400"/><path d="M10 437L12.500 441.500M17 441.500L19.500 446" stroke="#f8e040" stroke-width="1.500"/><path d="M8 438.500L13 435.500L25 444L20.500 447.500Z" fill="none" stroke="#6890f0" stroke-width=".6"/>
<!-- 11 yellow/pink corner -->
<path d="M7 466L16 461.500L27.500 465V477.500L22.500 480.500V470L14 468L9 480Z" fill="#f8e820" stroke="#a8a010" stroke-width=".7"/><path d="M10 469.500L15 467.500L22 470V480L15 476.500L10 479.500Z" fill="#f8a0d8"/><path d="M15 467.500V476.500" stroke="#d070b0" stroke-width=".7"/><path d="M24.500 468.500V477.500L26.500 476.500V467.500Z" fill="#30a848"/>
<!-- 12 TOP sphere -->
<path d="M9 511L12 505.500H20L23 511Z" fill="#8c8c88"/><circle cx="16" cy="498.500" r="9.500" fill="url(#sb2)"/><ellipse cx="16" cy="496.500" rx="7" ry="4.500" fill="#d8c8e8" opacity=".8"/>
<text x="16" y="499.500" font-family="'Liberation Sans',sans-serif" font-size="7" font-weight="bold" fill="#e03050" text-anchor="middle">TOP</text>
</svg>
<div class="a" style="left:0;top:836px;width:0;height:0"><div class="t" style="left:0;top:0;transform-origin:0 0;transform:rotate(-90deg) translate(8px,9.700px);color:#fff;font-size:14.500px"><b style="letter-spacing:.3px">TopSolid</b><span style="letter-spacing:-.15px"> ' Design</span></div></div>

<div class="a" id="frame"></div>
<svg class="a" id="cv" viewBox="47 150 1388 686" width="1388" height="686">
<defs>
<linearGradient id="bg" x1="0" y1="0" x2="0" y2="1"><stop offset="0" stop-color="#246eca"/><stop offset="1" stop-color="#28548b"/></linearGradient>
<linearGradient id="gBore" gradientUnits="userSpaceOnUse" x1="0" y1="383" x2="0" y2="597"><stop offset="0" stop-color="#4a4a4a"/><stop offset="0.58" stop-color="#b9b9b9"/><stop offset="1" stop-color="#444"/></linearGradient>
<linearGradient id="gTube" gradientUnits="userSpaceOnUse" x1="0" y1="352" x2="0" y2="628"><stop offset="0" stop-color="#4a4a4a"/><stop offset="0.02" stop-color="#4e4e4e"/><stop offset="0.32" stop-color="#a2a2a2"/><stop offset="0.48" stop-color="#cdcdcd"/><stop offset="0.54" stop-color="#d3d3d3"/><stop offset="0.61" stop-color="#cbcbcb"/><stop offset="0.98" stop-color="#484848"/><stop offset="1" stop-color="#444"/></linearGradient>
<linearGradient id="gCham" gradientUnits="userSpaceOnUse" x1="598" y1="362" x2="467.500" y2="471.700"><stop offset="0" stop-color="#9c9c9c"/><stop offset="0.09" stop-color="#b4b4b4"/><stop offset="0.26" stop-color="#c6c6c6"/><stop offset="0.36" stop-color="#b2b2b2"/><stop offset="0.44" stop-color="#858585"/><stop offset="0.50" stop-color="#5e5e5e"/><stop offset="0.58" stop-color="#525252"/><stop offset="0.78" stop-color="#4c4c4c"/><stop offset="1" stop-color="#404040"/></linearGradient>
<linearGradient id="gHoleT" x1="0" y1="0" x2="0" y2="1"><stop offset="0" stop-color="#c2c2c2"/><stop offset="1" stop-color="#444"/></linearGradient>
<linearGradient id="gHoleB" x1="0" y1="0" x2="0" y2="1"><stop offset="0" stop-color="#444"/><stop offset="1" stop-color="#c2c2c2"/></linearGradient>
<radialGradient id="gZ" cx="0.4" cy="0.35" r="0.7"><stop offset="0" stop-color="#40c8d8"/><stop offset="0.6" stop-color="#1890a8"/><stop offset="1" stop-color="#0a5068"/></radialGradient>
<linearGradient id="gYs" x1="0" y1="0" x2="1" y2="0"><stop offset="0" stop-color="#10e030"/><stop offset="0.5" stop-color="#a0a090"/><stop offset="1" stop-color="#406040"/></linearGradient>
<linearGradient id="gXs" x1="0" y1="0" x2="0" y2="1"><stop offset="0" stop-color="#f0e020"/><stop offset="0.5" stop-color="#a09030"/><stop offset="1" stop-color="#605820"/></linearGradient>
</defs>
<rect x="46" y="149" width="1390" height="688" fill="url(#bg)"/><rect x="47" y="150" width="1388" height="1" fill="#3a6ca6" opacity=".85"/>
<!-- body -->
<path d="M375.5 177.5H439.5V349Q439.5 351 441.5 351H548.5Q550.5 351 550.5 349V259.5H744.5V296H781.3V683H744.5V720H550.5V630Q550.5 628 548.5 628H441.5Q439.5 628 439.5 630V801.5H375.5Z" fill="#bdbdbd" stroke="#04041a" stroke-width="1.350" stroke-linejoin="miter"/>
<!-- hole bands -->
<rect x="374.800" y="283" width="65.400" height="31" fill="url(#gHoleT)"/>
<path d="M375.500 282.500H439.500" stroke="#858585" stroke-width="1"/><path d="M375 314.200H440" stroke="#060606" stroke-width="1.400"/>
<path d="M375.500 282V284.600M375.500 295.700V315M439.500 282V284.600M439.500 295.700V315" stroke="#06061c" stroke-width="1.500"/>
<rect x="374.800" y="665" width="65.400" height="32" fill="url(#gHoleB)"/>
<path d="M375.500 697.500H439.500" stroke="#858585" stroke-width="1"/><path d="M375 664.400H440" stroke="#060606" stroke-width="1.400"/>
<path d="M375.500 664V682.600M375.500 695.100V698M439.500 664V682.600M439.500 695.100V698" stroke="#06061c" stroke-width="1.500"/>
<!-- housing inner details -->
<path d="M550.5 282.8H725.5V306M550.500 287L560.300 296.300H707V282.800" fill="none" stroke="#0a0a14" stroke-width="1.2"/>
<path d="M716.5 283H725.5V291.5Z" fill="#444" stroke="#222" stroke-width="0.6"/>
<path d="M550.5 697.2H725.5V674M550.500 692L560 683.700H707V697.200" fill="none" stroke="#0a0a14" stroke-width="1.2"/>
<path d="M716.5 697H725.5V688.5Z" fill="#444" stroke="#222" stroke-width="0.6"/>
<!-- sphere + tube wall -->
<path d="M598 356.8A184 184 0 0 1 835.3 342.5H1046Q1048.3 342.5 1048.3 344.8V634.2Q1048.3 636.5 1046 636.5H835.3A184 184 0 0 1 598 622.2Z" fill="#d8d8d8" stroke="#06060c" stroke-width="1.5"/>
<!-- bore -->
<path d="M375.5 383.5L577 382.3V596.7L375.5 595.8Z" fill="url(#gBore)"/>
<path d="M375.5 383.5L577 382.3M375.5 595.8L577 596.7" stroke="#0c0c0c" stroke-width="1.3" fill="none"/>
<path d="M375.600 383V415.300M375.600 426V440.700M375.600 467.300V471.300M375.600 507.300V511.300M375.600 538V551.300M375.600 564.700V597" stroke="#06061c" stroke-width="1.400"/>
<!-- chamfer -->
<path d="M577 382.300L598.500 357H600V622H598.500L577 596.700Z" fill="url(#gCham)"/><path d="M598.500 357L577 382.300V596.700L598.500 622" fill="none" stroke="#0c0c0c" stroke-width="1.300"/>
<!-- inner tube -->
<path d="M598.5 357.3L1048 351.8V627.6L598.5 621.8Z" fill="url(#gTube)"/>
<path d="M598.5 357.3L1048 351.8M598.5 621.8L1048 627.6" stroke="#0c0c0c" stroke-width="1.3" fill="none"/>
<path d="M598.400 357V451M598.400 456V465M598.400 485V493M598.400 512V524M598.400 526V622" stroke="#0c0c0c" stroke-width="1.300"/>
<path d="M725.400 356.800V389.800M725.400 401.300V416.900M725.400 441.800V451.100M725.400 486.300V493.100M725.400 527.300V538.200M725.400 561.600V578.700M725.400 589V622.500" stroke="#101010" stroke-width="1.200"/>
<path d="M1048.3 344V635" stroke="#0a0a1e" stroke-width="1.3"/>
<!-- yellow seals -->
<rect x="720.4" y="305.8" width="11.2" height="17.8" fill="#e2d936" stroke="#3a3a20" stroke-width="1"/>
<rect x="720.4" y="655.6" width="11.2" height="18" fill="#e2d936" stroke="#3a3a20" stroke-width="1"/>
<!-- dimensions -->
<g stroke="#e8e020" stroke-width="1" fill="none">
<path d="M472.5 383.5V596"/><path d="M466.5 406L472.5 383.5L478.5 406M466.5 573.5L472.5 596L478.5 573.5"/>
<path d="M902.8 354V626"/><path d="M896.8 376.5L902.8 354L908.8 376.5M896.8 603.5L902.8 626L908.8 603.5"/>
</g>
<g stroke="#98b47c" stroke-width="1.4" fill="none"><path d="M1055 342.8H1157M1055 636.3H1157M1150.5 343V636"/></g>
<g stroke="#f0f030" stroke-width="1" fill="none"><path d="M1144.5 366L1150.5 343.5L1156.5 366M1144.5 613.5L1150.5 636L1156.5 613.5"/></g>
<g font-family="'Liberation Sans',sans-serif" font-weight="bold" font-size="14" fill="#f4f01c" text-anchor="middle">
<text x="472.300" y="486.300" font-size="13" fill="#e8e020">1°</text>
<text x="903" y="486.300" font-size="13" fill="#e8e020">2°</text>
<text x="1150.800" y="486.500">31.85</text>
</g>
<!-- triad -->
<path d="M131 719A33 33 0 0 1 164 752" fill="none" stroke="#c6c6c6" stroke-width="1.600"/>
<rect x="129.3" y="709" width="3.6" height="38" fill="url(#gYs)"/>
<rect x="129.6" y="709" width="3" height="12" fill="#18e038"/>
<path d="M131 693L137 710.5H125Z" fill="#16e030"/>
<rect x="137" y="750.3" width="37" height="3.6" fill="url(#gXs)"/>
<rect x="164" y="750.5" width="10" height="3.2" fill="#f0e020"/>
<path d="M190 752L173 746.5V757.8Z" fill="#c8bc20"/><path d="M190 752L173 746.5V752Z" fill="#e8dc20"/>
<circle cx="131" cy="752.3" r="6.3" fill="url(#gZ)"/>
<g font-family="'Liberation Sans',sans-serif" font-weight="bold">
<text x="126.800" y="681.500" font-size="14.500" fill="#20e040">y</text>
<text x="201.300" y="757.300" font-size="15" fill="#f0e020">x</text>
<text x="127.6" y="756" font-size="11" fill="#30f0f0">z</text>
</g>
</svg>

<div class="a" style="left:0;top:841px;width:1440px;height:1px;background:#aca899"></div>
<div class="a" style="left:0;top:842px;width:1440px;height:1px;background:#fff"></div>
<div class="a" style="left:3px;top:861px;width:1411px;height:37px;background:#fff;border-top:1px solid #d9d6c6;box-sizing:border-box"></div><div class="a" style="left:1414px;top:861px;width:16px;height:37px;background:#f4f2e9"></div><div class="a" style="left:1437px;top:860px;width:1px;height:38px;background:#aca899"></div><div class="a" style="left:1438px;top:844px;width:1px;height:54px;background:#fbfaf5"></div>
<div class="t" style="left:5px;top:863px;font-size:13.400px;font-weight:bold;transform:scaleX(.8);transform-origin:0 0">0</div>
<div class="a" style="left:4px;top:886px;width:77px;height:1px;background:repeating-linear-gradient(90deg,#111 0,#111 4.500px,transparent 4.500px,transparent 8px)"></div>
<div class="a" style="left:0;top:898px;width:1440px;height:2px;background:linear-gradient(180deg,#4a86e0,#2a62c8)"></div>
<div class="ssep" style="left:698px"></div><div class="ssep" style="left:768px"></div><div class="ssep" style="left:838px"></div><div class="ssep" style="left:891px"></div><div class="ssep" style="left:955px"></div><div class="ssep" style="left:1017px"></div><div class="ssep" style="left:1066px"></div><div class="ssep" style="left:1115px"></div><div class="ssep" style="left:1165px"></div><div class="ssep" style="left:1214px"></div><div class="ssep" style="left:1259px"></div><div class="ssep" style="left:1305px"></div>
<svg class="a" style="left:1413px;top:861px" width="16" height="35" viewBox="0 0 16 35"><rect x="1.500" y="1.500" width="13" height="14" rx="2" fill="#c6d4fb" stroke="#fff" stroke-width="1"/><rect x="1.500" y="19.500" width="13" height="14" rx="2" fill="#c6d4fb" stroke="#fff" stroke-width="1"/><path d="M1.500 15.500H14.500V3M1.500 33.500H14.500V21" fill="none" stroke="#9aaee8" stroke-width="1"/><path d="M4.500 10.500L8 7L11.500 10.500M4.500 24.500L8 28L11.500 24.500" fill="none" stroke="#4d6185" stroke-width="2"/></svg>

<span class="t" style="left:1.0px;top:127.5px;font-size:11.5px;font-weight:normal;letter-spacing:-0.481px;">Choisissez une fonction au menu</span><span class="t" style="left:83.0px;top:94.5px;font-size:11.5px;font-weight:normal;letter-spacing:-0.263px;">Enregistrer / Enregistrer</span><span class="t" style="left:1.0px;top:845.5px;font-size:11.5px;font-weight:normal;letter-spacing:-0.277px;">Enregistrer</span><span class="t" style="left:633.5px;top:845.5px;font-size:11.5px;font-weight:normal;letter-spacing:-0.180px;">X=-047.500</span><span class="t" style="left:703.5px;top:845.5px;font-size:11.5px;font-weight:normal;letter-spacing:-0.067px;">Y=+035.000</span><span class="t" style="left:773.5px;top:845.5px;font-size:11.5px;font-weight:normal;letter-spacing:-0.003px;">Z=+000.000</span><span class="t" style="left:843.5px;top:845.5px;font-size:11.5px;font-weight:normal;letter-spacing:-0.580px;">Mode=Sp</span><span class="t" style="left:897.5px;top:845.5px;font-size:11.5px;font-weight:normal;letter-spacing:-0.114px;">TxH=3.5</span><span class="t" style="left:960.5px;top:845.5px;font-size:11.5px;font-weight:normal;letter-spacing:0.145px;">Tol=</span><span class="t" style="left:992.0px;top:845.5px;font-size:11.5px;font-weight:normal;letter-spacing:-0.167px;">0.2</span><span class="t" style="left:1024.4px;top:845.5px;font-size:11.5px;font-weight:normal;letter-spacing:-0.258px;">Gri=oui</span><span class="t" style="left:1072.0px;top:845.5px;font-size:11.5px;font-weight:normal;letter-spacing:-0.198px;">Trsp=0</span><span class="t" style="left:1120.6px;top:845.5px;font-size:11.5px;font-weight:normal;letter-spacing:-0.232px;">Niv=</span><span class="t" style="left:1149.5px;top:845.5px;font-size:11.5px;font-weight:normal;letter-spacing:-0.406px;">0</span><span class="t" style="left:1169.5px;top:845.5px;font-size:11.5px;font-weight:normal;letter-spacing:-0.294px;">Déc= 3</span><span class="t" style="left:1218.0px;top:845.5px;font-size:11.5px;font-weight:normal;letter-spacing:0.122px;">Inv=Ca</span><span class="t" style="left:1263.4px;top:845.5px;font-size:11.5px;font-weight:normal;letter-spacing:-0.468px;">Mes=Elt</span><span class="t" style="left:1310.0px;top:845.5px;font-size:11.5px;font-weight:normal;letter-spacing:-0.446px;">Mat=aluminium</span>
</body></html>
